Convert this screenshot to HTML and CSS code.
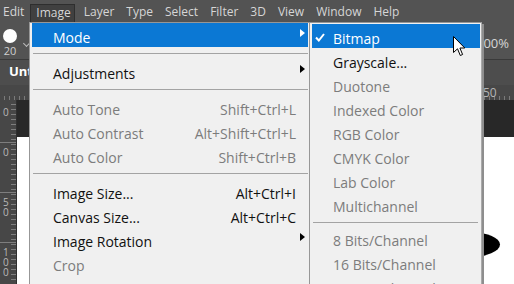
FILE: index.html
```html
<!DOCTYPE html>
<html lang="en">
<head>
    <meta charset="UTF-8">
    <meta name="viewport" content="width=device-width, initial-scale=1.0">
    <title>Image menu</title>
    <link rel="stylesheet" href="styles.css">
</head>
<body>

<div class="menubar">
    <span>Edit</span>
    <span class="active">Image</span>
    <span>Layer</span>
    <span>Type</span>
    <span>Select</span>
    <span>Filter</span>
    <span>3D</span>
    <span>View</span>
    <span>Window</span>
    <span>Help</span>
</div>

<div class="options">
    <div class="brush">
        <div class="brush-dot"></div>
        <div class="brush-size">20</div>
    </div>
    <span class="chevron"></span>
    <div class="zoom-value">100%</div>
</div>

<div class="tabs">
    <span class="tab">Untitled-1</span>
</div>

<div class="hruler"><span>50</span></div>

<div class="work">
    <div class="vruler">
        <div class="rl-group first"><div>0</div></div>
        <div class="rl-group"><div>0</div></div>
        <div class="rl-group"><div>5</div><div>0</div></div>
        <div class="rl-group"><div>1</div><div>0</div><div>0</div></div>
    </div>
    <div class="canvas">
        <div class="pasteboard"></div>
        <div class="paper">
            <div class="blob"></div>
        </div>
    </div>
</div>

<!-- Image menu -->
<div class="menu main-menu">
    <div class="item hover"><span>Mode</span><span class="key"></span><span class="arrow"></span></div>
    <div class="sep"></div>
    <div class="item"><span>Adjustments</span><span class="key"></span><span class="arrow"></span></div>
    <div class="sep"></div>
    <div class="item off"><span>Auto Tone</span><span class="key">Shift+Ctrl+L</span></div>
    <div class="item off"><span>Auto Contrast</span><span class="key">Alt+Shift+Ctrl+L</span></div>
    <div class="item off"><span>Auto Color</span><span class="key">Shift+Ctrl+B</span></div>
    <div class="sep"></div>
    <div class="item"><span>Image Size...</span><span class="key">Alt+Ctrl+I</span></div>
    <div class="item"><span>Canvas Size...</span><span class="key">Alt+Ctrl+C</span></div>
    <div class="item"><span>Image Rotation</span><span class="key"></span><span class="arrow"></span></div>
    <div class="item off"><span>Crop</span></div>
    <div class="item off"><span>Trim...</span></div>
</div>

<!-- Mode submenu -->
<div class="menu sub-menu">
    <div class="item hover">
        <svg class="check" width="10" height="9" viewBox="0 0 10 9"><polyline points="1,4.5 3.8,7.5 9,1" fill="none" stroke="#fff" stroke-width="2"/></svg>
        <span>Bitmap</span>
    </div>
    <div class="item"><span></span><span>Grayscale...</span></div>
    <div class="item off"><span></span><span>Duotone</span></div>
    <div class="item off"><span></span><span>Indexed Color</span></div>
    <div class="item off"><span></span><span>RGB Color</span></div>
    <div class="item off"><span></span><span>CMYK Color</span></div>
    <div class="item off"><span></span><span>Lab Color</span></div>
    <div class="item off"><span></span><span>Multichannel</span></div>
    <div class="sep"></div>
    <div class="item off"><span></span><span>8 Bits/Channel</span></div>
    <div class="item off"><span></span><span>16 Bits/Channel</span></div>
    <div class="item off"><span></span><span>32 Bits/Channel</span></div>
</div>

<svg class="cursor" width="13" height="21" viewBox="0 0 13 21">
    <path d="M0.5 0.5 V16.5 L4.5 12.8 L7.3 19.5 L9.6 18.5 L6.9 12 H11.8 Z" fill="#fff" stroke="#000" stroke-width="1"/>
</svg>

</body>
</html>
```

FILE: styles.css
```css
* {
    box-sizing: border-box;
}
html, body {
    margin: 0;
    padding: 0;
}
body {
    position: relative;
    width: 514px;
    height: 284px;
    overflow: hidden;
    background-color: #535353;
    font-family: "Open Sans", "Noto Sans", sans-serif;
}

/* barra de menus */
.menubar {
    display: flex;
    align-items: flex-end;
    height: 22px;
    margin-left: -3px;
    color: #d6d6d6;
    font-size: 12px;
}
.menubar span {
    height: 18px;
    padding: 0 6px;
    line-height: 16px;
    white-space: nowrap;
}
.menubar .active {
    background-color: #404040;
    border: 1px solid #2e2e2e;
    border-bottom: none;
    padding: 0 3px 0 5px;
    margin-right: 3px;
}

/* barra de opções */
.options {
    display: flex;
    align-items: flex-start;
    height: 38px;
    border-bottom: 1px solid #3a3a3a;
}
.brush {
    width: 14px;
    margin: 7px 0 0 3px;
}
.brush-dot {
    width: 14px;
    height: 14px;
    border-radius: 50%;
    background-color: #fff;
}
.brush-size {
    margin-top: 2px;
    font-size: 11px;
    line-height: 12px;
    color: #d0d0d0;
    text-align: center;
}
.chevron {
    width: 5px;
    height: 5px;
    margin: 19px 0 0 7px;
    border-right: 1px solid #bbb;
    border-bottom: 1px solid #bbb;
    transform: rotate(45deg);
}
.zoom-value {
    margin: 13px 5px 0 auto;
    font-size: 13px;
    line-height: 16px;
    color: #d6d6d6;
}

/* abas do documento */
.tabs {
    height: 25px;
    background-color: #4d4d4d;
}
.tab {
    display: block;
    width: 29px;
    overflow: hidden;
    padding-left: 9px;
    font-size: 13px;
    font-weight: 700;
    line-height: 23px;
    color: #fff;
    white-space: nowrap;
}

/* réguas */
.hruler {
    height: 15px;
    padding: 2px 0 0 483px;
    font-size: 12px;
    line-height: 12px;
    color: #b5b5b5;
    background-color: #474747;
    background-image: repeating-linear-gradient(to right, transparent 0 4px, #7a7a7a 4px 5px);
    background-size: 100% 4px;
    background-position: 0 100%;
    background-repeat: no-repeat;
}
.work {
    display: flex;
    height: 184px;
}
.vruler {
    width: 17px;
    overflow: hidden;
    border-right: 1px solid #2f2f2f;
    font-size: 10px;
    line-height: 10px;
    color: #b9b9b9;
    background-color: #474747;
    background-image:
        repeating-linear-gradient(to bottom, transparent 0 42px, #7e7e7e 42px 43px, transparent 43px 50px),
        repeating-linear-gradient(to bottom, transparent 0 4px, #7e7e7e 4px 5px);
    background-size: 100% 100%, 5px 100%;
    background-position: 0 0, 100% 0;
    background-repeat: no-repeat;
}
.rl-group {
    height: 50px;
    padding-left: 3px;
}
.rl-group.first {
    padding-top: 7px;
    height: 47px;
}
.canvas {
    flex: 1;
    display: flex;
    flex-direction: column;
}
.pasteboard {
    height: 37px;
    background-color: #282828;
}
.paper {
    position: relative;
    flex: 1;
    background-color: #fff;
}
.blob {
    position: absolute;
    left: 423px;
    top: 95px;
    width: 60px;
    height: 25px;
    border-radius: 50%;
    background-color: #000;
}

/* menus */
.menu {
    position: absolute;
    top: 22px;
    background-color: #f0f0f0;
    border: 1px solid #979797;
    font-size: 14px;
    color: #111;
}
.main-menu {
    left: 29px;
    width: 281px;
    padding: 0 1px 0 2px;
}
.sub-menu {
    left: 309px;
    width: 173px;
    padding: 1px 1px 0 2px;
    border-right-color: #aaa;
    box-shadow: 2px 2px 0 #8e8e8e;
}
.item {
    display: grid;
    grid-template-columns: 1fr auto 12px;
    align-items: center;
    height: 24px;
    padding: 4px 0 0 21px;
    white-space: nowrap;
}
.sub-menu .item {
    grid-template-columns: 18px 1fr;
    padding-left: 3px;
}
.item .key {
    text-align: right;
}
.item.off {
    color: #7c7c7c;
}
.item.hover {
    background-color: #0b78d4;
    color: #fff;
}
.arrow {
    justify-self: center;
    width: 0;
    height: 0;
    margin-bottom: 8px;
    border-left: 5px solid #000;
    border-top: 4.5px solid transparent;
    border-bottom: 4.5px solid transparent;
}
.hover .arrow {
    border-left-color: #fff;
}
.check {
    margin-bottom: 2px;
}
.sep {
    height: 1px;
    margin: 6px 0 5px 1px;
    background-color: #a3a3a3;
}
.sub-menu .sep {
    margin: 6px 2px 3px 1px;
}

.cursor {
    position: absolute;
    left: 453px;
    top: 36px;
}
```
